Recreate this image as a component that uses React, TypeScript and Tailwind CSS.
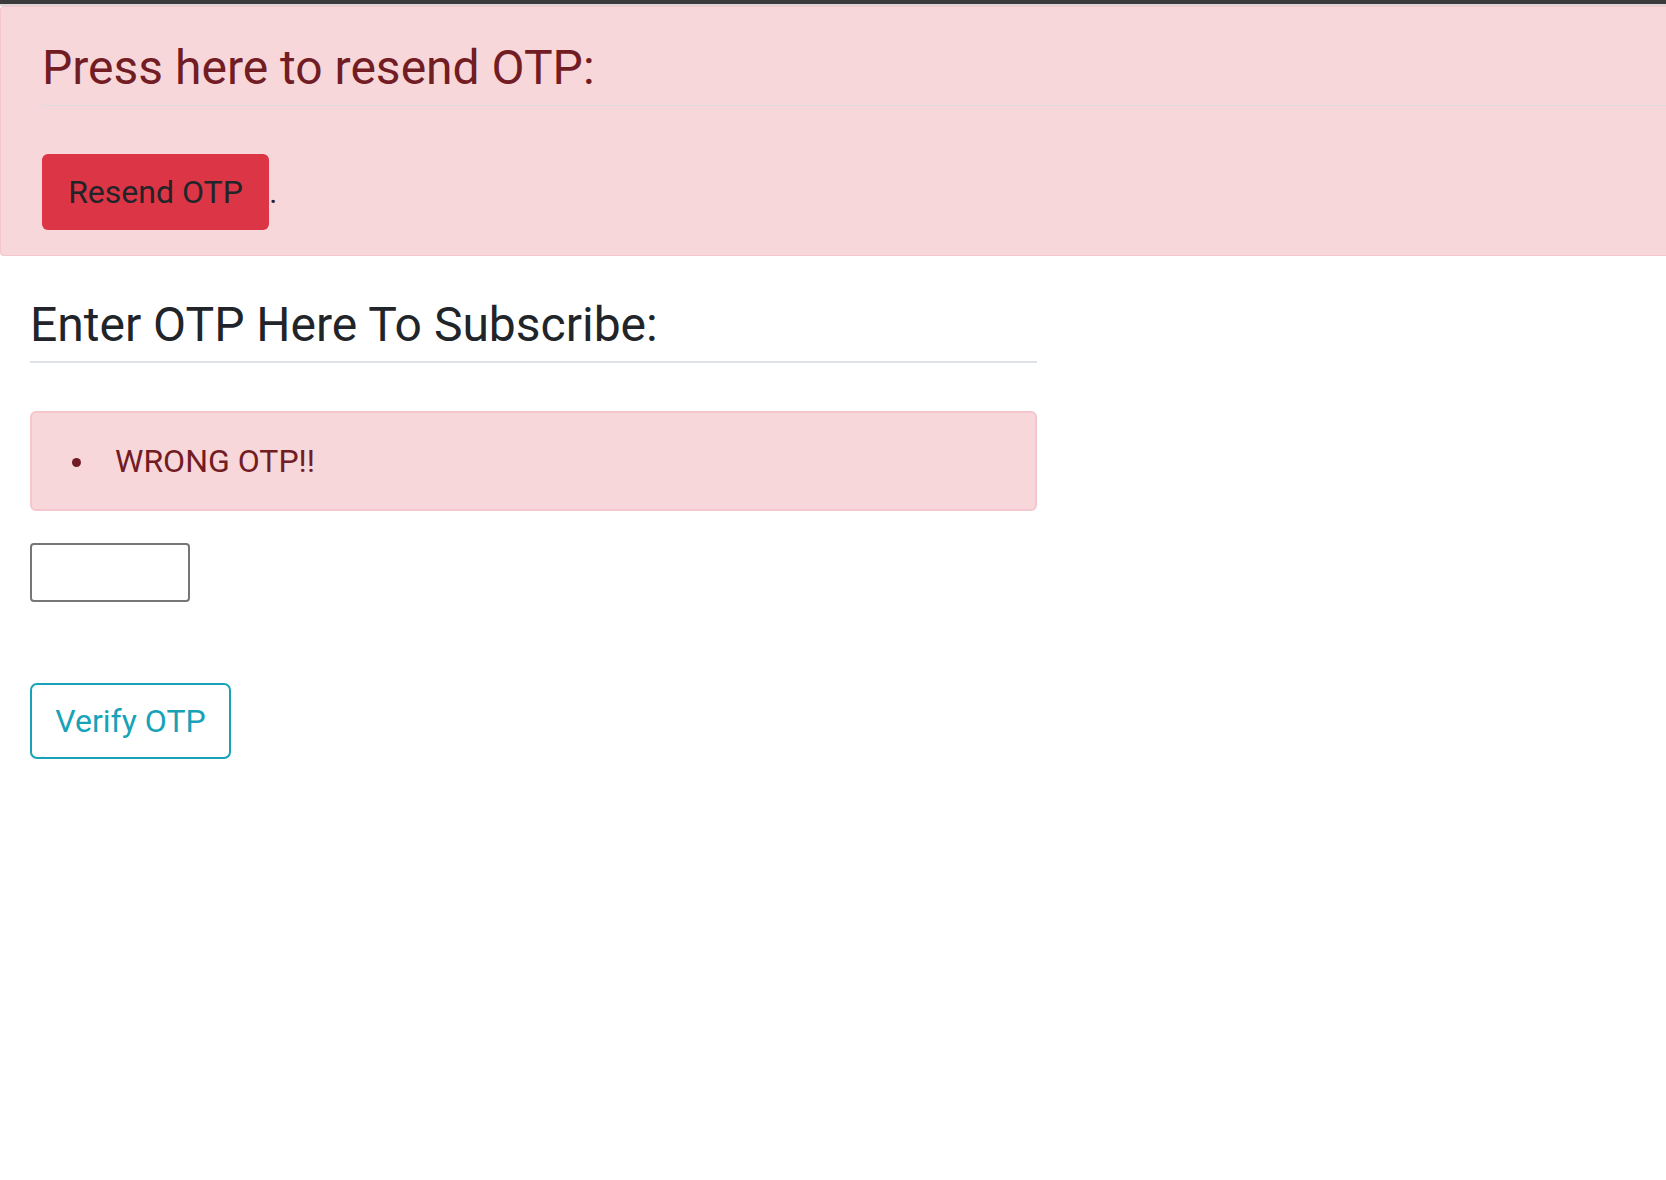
import React from "react";

export default function App() {
  return (
    <div className="min-h-[1180px] w-full overflow-hidden bg-white font-['Roboto','Liberation_Sans',sans-serif]">
      <div className="h-[4px] bg-[#3a3a3a]" />
      <div className="h-[2px] bg-[#ddd3d5]" />
      {/* Resend alert */}
      <div className="w-[1680px] rounded-l-[4px] border border-r-0 border-[#f5c6cb] bg-[#f8d7da] pl-[41px] pt-[32px] pb-[25px] text-[#721c24]">
        <h1 className="text-[48px] font-normal leading-[57.6px] text-[#721c24]">
          Press here to resend OTP:
        </h1>
        <div className="mt-[8px] h-px bg-[#dcdbe1]" />
        <div className="mt-[48px] flex items-baseline">
          <button className="flex h-[76px] w-[227px] items-center justify-center rounded-[6px] bg-[#dc3545] text-[32px] leading-[48px] text-[#212529]">
            Resend OTP
          </button>
          <span className="ml-[1px] text-[22px] font-bold text-[#2e1a2c]">.</span>
        </div>
      </div>

      {/* Subscribe section */}
      <div className="w-[1037px] pl-[30px]">
        <h2 className="mt-[40px] text-[48px] font-normal leading-[57.6px] text-[#212529]">
          Enter OTP Here To Subscribe:
        </h2>
        <div className="mt-[8px] h-[2px] bg-[#dee2e6]" />
        <div className="mt-[48px] rounded-[6px] border-2 border-[#f5c6cb] bg-[#f8d7da] pt-[24px] pb-[24px] text-[#721c24]">
          <ul className="flex items-center">
            <li className="flex items-center">
              <span className="ml-[40px] mt-[2px] block h-[9px] w-[9px] rounded-full bg-[#721c24]" />
              <span className="ml-[34px] text-[32px] leading-[48px]">WRONG OTP!!</span>
            </li>
          </ul>
        </div>
        <input
          type="text"
          className="mt-[32px] block h-[59px] w-[160px] rounded-[4px] border-2 border-[#767676] bg-white outline-none"
        />
        <button className="mt-[81px] flex h-[76px] w-[201px] items-center justify-center rounded-[7px] border-2 border-[#17a2b8] bg-white text-[32px] leading-[48px] text-[#17a2b8]">
          Verify OTP
        </button>
      </div>
    </div>
  );
}
